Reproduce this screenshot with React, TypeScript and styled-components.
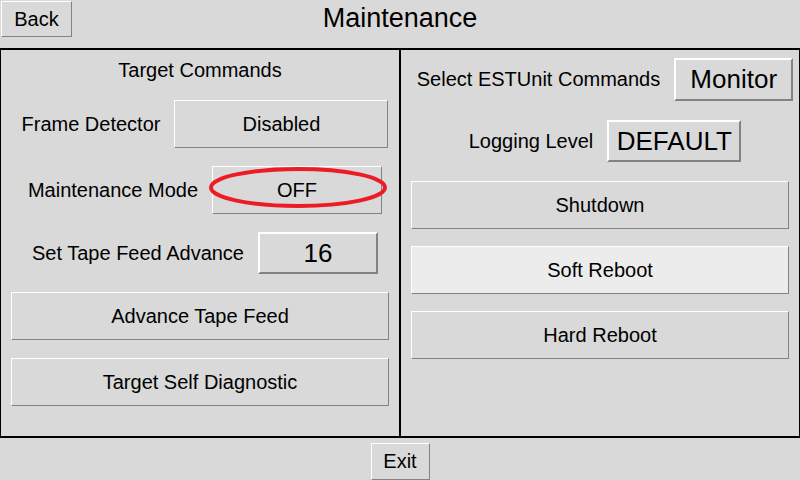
import React from 'react';
import styled, { createGlobalStyle } from 'styled-components';

const GlobalStyle = createGlobalStyle`
  html, body {
    margin: 0;
    padding: 0;
    background: #d9d9d9;
  }
  body {
    font-family: 'Liberation Sans', Arial, sans-serif;
  }
`;

const Screen = styled.div`
  width: 800px;
  height: 480px;
  background: #d9d9d9;
  display: flex;
  flex-direction: column;
  overflow: hidden;
  color: #000;
  font-family: 'Liberation Sans', Arial, sans-serif;
`;

const TopBar = styled.div`
  height: 48px;
  display: grid;
  grid-template-columns: 1fr auto 1fr;
  align-items: start;
`;

const Title = styled.div`
  font-size: 27px;
  line-height: 36px;
  text-align: center;
`;

const Panels = styled.div`
  height: 390px;
  display: flex;
`;

const Panel = styled.div`
  box-sizing: border-box;
  width: 400px;
  height: 100%;
  border-style: solid;
  border-color: #000;
  border-width: 2px 1px;
  padding-top: 8px;
  display: flex;
  flex-direction: column;
  align-items: center;
`;

const Stack = styled.div<{ $gap: number }>`
  display: flex;
  flex-direction: column;
  align-items: center;
  gap: ${(p) => p.$gap}px;
  width: 100%;
`;

const Heading = styled.div`
  height: 24px;
  line-height: 24px;
  font-size: 20px;
  text-align: center;
`;

const Row = styled.div`
  box-sizing: border-box;
  width: 100%;
  padding-left: 10px;
  display: flex;
  justify-content: center;
  align-items: center;
  gap: 14px;
`;

const Label = styled.span`
  font-size: 20px;
  white-space: nowrap;
`;

const Button = styled.button<{ $w?: number; $h?: number; $big?: boolean; $light?: boolean }>`
  box-sizing: border-box;
  flex: none;
  width: ${(p) => (p.$w ? `${p.$w}px` : '378px')};
  height: ${(p) => (p.$h ? `${p.$h}px` : '48px')};
  margin: 0;
  padding: 0;
  background: ${(p) => (p.$light ? '#ececec' : '#d9d9d9')};
  border-style: solid;
  border-width: ${(p) => (p.$big ? '2px' : '1px')};
  border-color: #ffffff #828282 #828282 #ffffff;
  border-radius: 0;
  color: #000;
  font-family: 'Liberation Sans', Arial, sans-serif;
  font-size: ${(p) => (p.$big ? '26px' : '20px')};
  white-space: nowrap;
`;

const CornerButton = styled(Button)`
  margin: 1px 0 0 1px;
`;

const Marked = styled.div`
  position: relative;
  display: flex;
`;

const Ring = styled.svg`
  position: absolute;
  left: -3px;
  top: 1px;
  pointer-events: none;
`;

const Footer = styled.div`
  flex: 1;
  display: flex;
  justify-content: center;
  align-items: flex-start;
  padding-top: 5px;
`;

function App() {
  return (
    <Screen>
      <GlobalStyle />
      <TopBar>
        <div>
          <CornerButton $w={71} $h={36}>Back</CornerButton>
        </div>
        <Title>Maintenance</Title>
        <div />
      </TopBar>

      <Panels>
        <Panel>
          <Stack $gap={18}>
            <Heading>Target Commands</Heading>
            <Row>
              <Label>Frame Detector</Label>
              <Button $w={214}>Disabled</Button>
            </Row>
            <Row>
              <Label>Maintenance Mode</Label>
              <Marked>
                <Button $w={170}>OFF</Button>
                <Ring width="178" height="41" viewBox="0 0 178 41">
                  <ellipse cx="89" cy="20.5" rx="87" ry="18.5" fill="none" stroke="#ed1c24" strokeWidth="4" />
                </Ring>
              </Marked>
            </Row>
            <Row>
              <Label>Set Tape Feed Advance</Label>
              <Button $w={120} $h={42} $big>16</Button>
            </Row>
            <Button>Advance Tape Feed</Button>
            <Button>Target Self Diagnostic</Button>
          </Stack>
        </Panel>

        <Panel>
          <Stack $gap={19}>
            <Row>
              <Label>Select ESTUnit Commands</Label>
              <Button $w={119} $h={43} $big>Monitor</Button>
            </Row>
            <Row>
              <Label>Logging Level</Label>
              <Button $w={134} $h={42} $big>DEFAULT</Button>
            </Row>
            <Stack $gap={17}>
              <Button>Shutdown</Button>
              <Button $light>Soft Reboot</Button>
              <Button>Hard Reboot</Button>
            </Stack>
          </Stack>
        </Panel>
      </Panels>

      <Footer>
        <Button $w={59} $h={37}>Exit</Button>
      </Footer>
    </Screen>
  );
}

export default App;
